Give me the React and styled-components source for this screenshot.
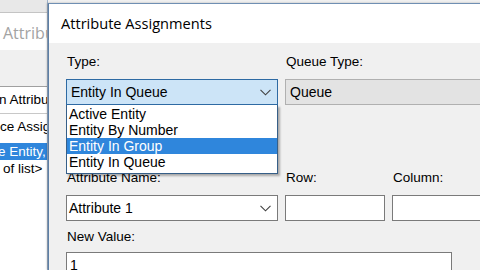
import React from 'react';
import styled, { createGlobalStyle } from 'styled-components';

const Global = createGlobalStyle`
    html, body {
        margin: 0;
        padding: 0;
        overflow: hidden;
        background: #f0f0f0;
    }
`;

const Page = styled.div`
    display: flex;
    width: 480px;
    height: 270px;
    overflow: hidden;
    background: #f0f0f0;
    font-family: 'Liberation Sans', Arial, sans-serif;
    color: #000;
`;

/* window behind the dialog */
const BackWindow = styled.div`
    flex: 0 0 47px;
    display: flex;
    flex-direction: column;
    overflow: hidden;
    border-right: 1px solid #9fb4cc;
`;

const BackStrip = styled.div`
    height: 12px;
    background: #e8e8e8;
    border-bottom: 1px solid #c4c4c4;
`;

const BackTitle = styled.div`
    height: 37px;
    background: #fff;
    padding-left: 3px;
    line-height: 40px;
    font-family: 'Open Sans', 'Noto Sans', sans-serif;
    font-size: 16px;
    color: #a3a3a3;
    white-space: nowrap;
`;

const BackGap = styled.div`
    height: 36px;
`;

const BackList = styled.div`
    flex: 1;
    background: #fff;
    border-top: 1px solid #a0a0a0;
`;

const BackRow = styled.div`
    height: ${p => p.$h}px;
    line-height: ${p => p.$h}px;
    font-size: 13.5px;
    white-space: nowrap;
    text-indent: ${p => p.$indent || 0}px;
    background: ${p => (p.$selected ? '#2f86dc' : 'transparent')};
    color: ${p => (p.$selected ? '#fff' : '#000')};
    border-bottom: ${p => (p.$line ? '1px solid #c8c8c8' : 'none')};
    margin-top: ${p => p.$top || 0}px;
`;

/* the dialog */
const Dialog = styled.div`
    flex: 0 0 460px;
    margin-top: 3px;
    display: flex;
    flex-direction: column;
    border-top: 1px solid #6f8fb3;
    border-left: 1px solid #5d7fa6;
    box-shadow: -1px 0 2px rgba(0, 0, 0, 0.25);
`;

const TitleBar = styled.div`
    height: 39px;
    background: #fff;
    padding-left: 12px;
    line-height: 39px;
    font-family: 'Open Sans', 'Noto Sans', sans-serif;
    font-size: 14.6px;
    white-space: nowrap;
`;

const Body = styled.div`
    flex: 1;
    background: #f0f0f0;
    padding: 11px 0 0 17px;
    display: grid;
    grid-template-columns: 212px 100px 100px;
    column-gap: 7px;
    align-content: start;
`;

const Field = styled.div`
    grid-column: span ${p => p.$span || 1};
    margin-top: ${p => p.$top || 0}px;
    display: flex;
    flex-direction: column;
    gap: ${p => p.$gap || 9}px;
    min-width: 0;
`;

const Label = styled.div`
    height: 16px;
    line-height: 16px;
    font-size: 13.5px;
    padding-left: 1px;
    white-space: nowrap;
`;

const ComboWrap = styled.div`
    position: relative;
    width: ${p => p.$w || 'auto'};
`;

const Box = styled.div`
    box-sizing: border-box;
    height: 26px;
    display: flex;
    align-items: center;
    padding: 0 6px 0 ${p => p.$pl || 3}px;
    font-size: 14px;
    white-space: nowrap;
    background: ${p => p.$bg || '#fff'};
    border: 1px solid ${p => p.$border || '#7a7a7a'};
`;

const BoxText = styled.span`
    flex: 1;
`;

const DropList = styled.div`
    position: absolute;
    top: 100%;
    left: 0;
    right: 0;
    box-sizing: border-box;
    background: #fff;
    border: 1px solid #365f88;
    border-top: none;
    padding: 1px 0 3px;
    box-shadow: 2px 2px 2px rgba(0, 0, 0, 0.3);
    z-index: 2;
`;

const Item = styled.div`
    height: 16px;
    line-height: 16px;
    padding-left: 2px;
    font-size: 14px;
    background: ${p => (p.$selected ? '#2f86dc' : 'transparent')};
    color: ${p => (p.$selected ? '#fff' : '#000')};
`;

const Chevron = () => (
    <svg width="11" height="7" viewBox="0 0 11 7">
        <path d="M0.5 0.8 L5.5 5.8 L10.5 0.8" fill="none" stroke="#404040" strokeWidth="1.1" />
    </svg>
);

const typeOptions = ['Active Entity', 'Entity By Number', 'Entity In Group', 'Entity In Queue'];

const App = () => {
    return (
        <Page>
            <Global />
            <BackWindow>
                <BackStrip />
                <BackTitle>Attributes</BackTitle>
                <BackGap />
                <BackList>
                    <BackRow $h={26} $indent={-1} $line>n Attributes</BackRow>
                    <BackRow $h={26}>ce Assignments</BackRow>
                    <BackRow $h={17} $top={3} $indent={-2} $selected>e Entity, Attribute 1</BackRow>
                    <BackRow $h={17} $indent={3}>of list&gt;</BackRow>
                </BackList>
            </BackWindow>

            <Dialog>
                <TitleBar>Attribute Assignments</TitleBar>
                <Body>
                    <Field>
                        <Label>Type:</Label>
                        <ComboWrap>
                            <Box $bg="#cce4f7" $border="#2e6aa3" $pl={4}>
                                <BoxText>Entity In Queue</BoxText>
                                <Chevron />
                            </Box>
                            <DropList>
                                {typeOptions.map(o => (
                                    <Item key={o} $selected={o === 'Entity In Group'}>{o}</Item>
                                ))}
                            </DropList>
                        </ComboWrap>
                    </Field>
                    <Field $span={2}>
                        <Label>Queue Type:</Label>
                        <Box $bg="#e3e3e3" $border="#b0b0b0" $pl={4}>
                            <BoxText>Queue</BoxText>
                        </Box>
                    </Field>

                    <Field $top={65}>
                        <Label>Attribute Name:</Label>
                        <Box $pl={2}>
                            <BoxText>Attribute 1</BoxText>
                            <Chevron />
                        </Box>
                    </Field>
                    <Field $top={65}>
                        <Label>Row:</Label>
                        <Box />
                    </Field>
                    <Field $top={65}>
                        <Label>Column:</Label>
                        <Box />
                    </Field>

                    <Field $span={3} $top={8} $gap={7}>
                        <Label>New Value:</Label>
                        <ComboWrap $w="386px">
                            <Box $pl={3}>
                                <BoxText>1</BoxText>
                            </Box>
                        </ComboWrap>
                    </Field>
                </Body>
            </Dialog>
        </Page>
    );
};

export default App;
